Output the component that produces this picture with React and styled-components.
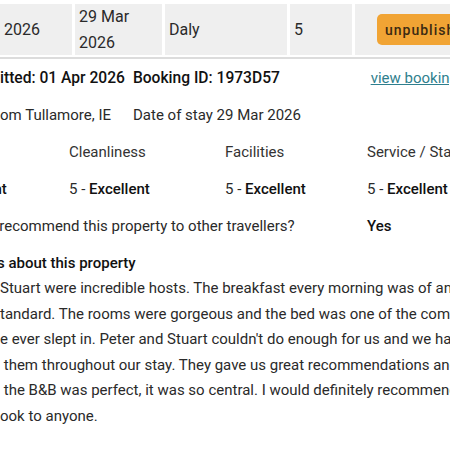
import styled, { createGlobalStyle } from "styled-components";

const GlobalStyle = createGlobalStyle`
  html, body {
    margin: 0;
    padding: 0;
    background: #ffffff;
    overflow: hidden;
  }
  body {
    font-family: Roboto, "Liberation Sans", Arial, sans-serif;
    color: #222222;
    font-size: 15px;
  }
`;

const cells = [
  { width: 72, lines: ["2026"] },
  { width: 87, lines: ["29 Mar", "2026"] },
  { width: 122, lines: ["Daly"] },
  { width: 62, lines: ["5"] },
];

const ratings = [
  { label: "Overall", score: "5", word: "Excellent" },
  { label: "Cleanliness", score: "5", word: "Excellent" },
  { label: "Facilities", score: "5", word: "Excellent" },
  { label: "Service / Staff", score: "5", word: "Excellent" },
];

function App() {
  return (
    <Page>
      <GlobalStyle />

      {/* booking row of the table */}
      <TableRow>
        {cells.map((c, i) => (
          <Cell key={i} $width={c.width}>
            {c.lines.map((l) => (
              <div key={l}>{l}</div>
            ))}
          </Cell>
        ))}
        <ActionCell>
          <StatusBtn>unpublish</StatusBtn>
        </ActionCell>
      </TableRow>

      <Details>
        <MetaRow>
          <MetaStrong>itted: 01 Apr 2026</MetaStrong>
          <MetaStrong>Booking ID: 1973D57</MetaStrong>
          <ViewLink href="#">view booking</ViewLink>
        </MetaRow>

        <Location>
          <span>om Tullamore, IE</span>
          <span>Date of stay 29 Mar 2026</span>
        </Location>

        <RatingGrid>
          {ratings.map((r) => (
            <Label key={r.label}>{r.label}</Label>
          ))}
          {ratings.map((r) => (
            <span key={r.label}>
              {r.score} - <Strong>{r.word}</Strong>
            </span>
          ))}
          <Question>Would you recommend this property to other travellers?</Question>
          <Strong>Yes</Strong>
        </RatingGrid>

        <Comments>
          <CommentTitle>s about this property</CommentTitle>
          <Review>
            Stuart were incredible hosts. The breakfast every morning was of an exceptional
            <br />
            tandard. The rooms were gorgeous and the bed was one of the comfiest
            <br />
            e ever slept in. Peter and Stuart couldn't do enough for us and we had
            <br />
            &nbsp;them throughout our stay. They gave us great recommendations and
            <br />
            &nbsp;the B&amp;B was perfect, it was so central. I would definitely recommend
            <br />
            ook to anyone.
          </Review>
        </Comments>
      </Details>
    </Page>
  );
}

export default App;

/* whole page, wider than the window */
const Page = styled.div`
  width: 520px;
  padding-top: 4px;
`;

/* table row with grey cells */
const TableRow = styled.div`
  display: flex;
  gap: 3px;
  padding-bottom: 2px;
  border-bottom: 2px solid #dcdcdc;
  font-size: 16px;
`;

const Cell = styled.div`
  width: ${(p) => p.$width}px;
  height: 51px;
  box-sizing: border-box;
  padding: 0 4px;
  background: #efefef;
  display: flex;
  flex-direction: column;
  justify-content: center;
  line-height: 26px;
  color: #2a2a2a;
`;

const ActionCell = styled.div`
  flex: 1;
  height: 51px;
  background: #efefef;
  display: flex;
  align-items: center;
  padding-left: 22px;
`;

const StatusBtn = styled.div`
  height: 31px;
  padding: 0 8px;
  display: flex;
  align-items: center;
  background: #f1a434;
  border-radius: 5px;
  color: #3b2a12;
  font-size: 14px;
  font-weight: 500;
  letter-spacing: 1px;
`;

/* review details */
const Details = styled.div`
  display: flex;
  flex-direction: column;
  gap: 13px;
  margin-top: 7px;
  line-height: 24px;
`;

const MetaRow = styled.div`
  display: flex;
  gap: 8px;
  padding-right: 62px;
`;

const Strong = styled.span`
  font-weight: 500;
  color: #111111;
`;

const MetaStrong = styled(Strong)`
  font-size: 15.6px;
`;

const ViewLink = styled.a`
  margin-left: auto;
  color: #2f7f8e;
  text-decoration: underline;
`;

const Location = styled.div`
  display: flex;
  gap: 22px;
  color: #2a2a2a;
`;

const RatingGrid = styled.div`
  display: grid;
  grid-template-columns: 143px 156px 142px 1fr;
  row-gap: 13px;
  margin-left: -74px;
  color: #2a2a2a;
`;

const Label = styled.span`
  color: #333333;
`;

const Question = styled.span`
  grid-column: 1 / 4;
  white-space: nowrap;
`;

const Comments = styled.div`
  display: flex;
  flex-direction: column;
  gap: 1px;
`;

const CommentTitle = styled.div`
  font-weight: 500;
  color: #111111;
  margin-left: -3px;
`;

const Review = styled.p`
  margin: 0;
  line-height: 25.6px;
  white-space: nowrap;
  color: #2a2a2a;
`;
